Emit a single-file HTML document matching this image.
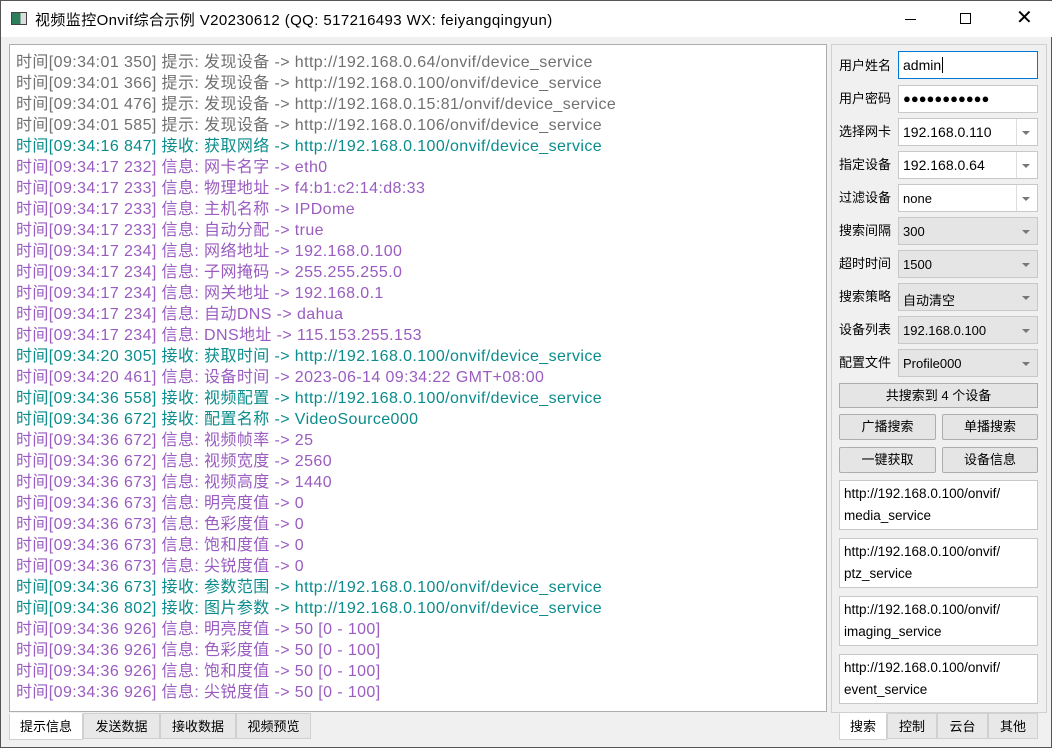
<!DOCTYPE html><html><head><meta charset="utf-8"><style>
*{box-sizing:border-box;margin:0;padding:0}
body{width:1052px;height:748px;background:#f0f0f0;font-family:"Liberation Sans","Noto Sans CJK SC",sans-serif;position:relative;overflow:hidden;border:1px solid #555}
.a{position:absolute}
#title{left:0;top:0;width:1052px;height:36px;background:#fff}
#title .t{left:34px;top:8px;font-size:15px;color:#000;letter-spacing:0.4px}
#log{left:8px;top:43px;width:818px;height:668px;background:#fff;border:1px solid #adadad;padding:7px 0 0 6px;font-size:16px;line-height:21px;white-space:nowrap;letter-spacing:0.4px}
.g{color:#707070}.c{color:#0b8b8b}.p{color:#9a5cc0}
#rp{left:830px;top:43px;width:216px;height:669px;border:1px solid #d0d0d0;background:#f0f0f0}
.lb{left:838px;font-size:13px;color:#000}
.in{left:897px;width:140px;height:28px;background:#fff;border:1px solid #c8c8c8;font-size:14px;padding:5px 4px;color:#000}
.dd::after{content:"";position:absolute;right:0;top:0;width:20px;height:26px;border-left:1px solid #ddd}
.ar{right:7px;top:12px;width:0;height:0;border-left:4px solid transparent;border-right:4px solid transparent;border-top:4px solid #777}
.bt{background:#e5e5e5;border:1px solid #adadad;font-size:13px;text-align:center;line-height:23px;border-radius:2px}
.tb{background:#fff;border:1px solid #c8c8c8;left:838px;width:199px;height:50px;font-size:13.5px;line-height:22px;padding:2px 4px}
.tab{top:712px;height:26px;border:1px solid #d0d0d0;background:#e8e8e8;font-size:13px;text-align:center;line-height:26px}
</style></head><body>
<div id="title" class="a">
<div class="a" style="left:10px;top:11px;width:16px;height:13px;border:1px solid #444;background:linear-gradient(90deg,#2e7d5a 60%,#ddd 60%)"></div>
<div class="a t">视频监控Onvif综合示例 V20230612 (QQ: 517216493 WX: feiyangqingyun)</div>
<div class="a" style="left:904px;top:18px;width:11px;height:1px;background:#000"></div>
<div class="a" style="left:959px;top:12px;width:11px;height:11px;border:1px solid #000"></div>
<div class="a" style="left:1015px;top:6px;font-size:20px;line-height:22px">✕</div>
</div>
<div id="log" class="a">
<div class="g">时间[09:34:01 350] 提示: 发现设备 -&gt; http://192.168.0.64/onvif/device_service</div>
<div class="g">时间[09:34:01 366] 提示: 发现设备 -&gt; http://192.168.0.100/onvif/device_service</div>
<div class="g">时间[09:34:01 476] 提示: 发现设备 -&gt; http://192.168.0.15:81/onvif/device_service</div>
<div class="g">时间[09:34:01 585] 提示: 发现设备 -&gt; http://192.168.0.106/onvif/device_service</div>
<div class="c">时间[09:34:16 847] 接收: 获取网络 -&gt; http://192.168.0.100/onvif/device_service</div>
<div class="p">时间[09:34:17 232] 信息: 网卡名字 -&gt; eth0</div>
<div class="p">时间[09:34:17 233] 信息: 物理地址 -&gt; f4:b1:c2:14:d8:33</div>
<div class="p">时间[09:34:17 233] 信息: 主机名称 -&gt; IPDome</div>
<div class="p">时间[09:34:17 233] 信息: 自动分配 -&gt; true</div>
<div class="p">时间[09:34:17 234] 信息: 网络地址 -&gt; 192.168.0.100</div>
<div class="p">时间[09:34:17 234] 信息: 子网掩码 -&gt; 255.255.255.0</div>
<div class="p">时间[09:34:17 234] 信息: 网关地址 -&gt; 192.168.0.1</div>
<div class="p">时间[09:34:17 234] 信息: 自动DNS -&gt; dahua</div>
<div class="p">时间[09:34:17 234] 信息: DNS地址 -&gt; 115.153.255.153</div>
<div class="c">时间[09:34:20 305] 接收: 获取时间 -&gt; http://192.168.0.100/onvif/device_service</div>
<div class="p">时间[09:34:20 461] 信息: 设备时间 -&gt; 2023-06-14 09:34:22 GMT+08:00</div>
<div class="c">时间[09:34:36 558] 接收: 视频配置 -&gt; http://192.168.0.100/onvif/device_service</div>
<div class="c">时间[09:34:36 672] 接收: 配置名称 -&gt; VideoSource000</div>
<div class="p">时间[09:34:36 672] 信息: 视频帧率 -&gt; 25</div>
<div class="p">时间[09:34:36 672] 信息: 视频宽度 -&gt; 2560</div>
<div class="p">时间[09:34:36 673] 信息: 视频高度 -&gt; 1440</div>
<div class="p">时间[09:34:36 673] 信息: 明亮度值 -&gt; 0</div>
<div class="p">时间[09:34:36 673] 信息: 色彩度值 -&gt; 0</div>
<div class="p">时间[09:34:36 673] 信息: 饱和度值 -&gt; 0</div>
<div class="p">时间[09:34:36 673] 信息: 尖锐度值 -&gt; 0</div>
<div class="c">时间[09:34:36 673] 接收: 参数范围 -&gt; http://192.168.0.100/onvif/device_service</div>
<div class="c">时间[09:34:36 802] 接收: 图片参数 -&gt; http://192.168.0.100/onvif/device_service</div>
<div class="p">时间[09:34:36 926] 信息: 明亮度值 -&gt; 50 [0 - 100]</div>
<div class="p">时间[09:34:36 926] 信息: 色彩度值 -&gt; 50 [0 - 100]</div>
<div class="p">时间[09:34:36 926] 信息: 饱和度值 -&gt; 50 [0 - 100]</div>
<div class="p">时间[09:34:36 926] 信息: 尖锐度值 -&gt; 50 [0 - 100]</div>
</div>
<div class="a tab" style="left:8px;width:74px;background:#fff;border-top-color:#fff;height:27px">提示信息</div>
<div class="a tab" style="left:82px;width:77px">发送数据</div>
<div class="a tab" style="left:159px;width:76px">接收数据</div>
<div class="a tab" style="left:235px;width:75px">视频预览</div>
<div id="rp" class="a"></div>
<div class="a lb" style="top:54px">用户姓名</div><div class="a in" style="top:50px;border-color:#0078d7">admin<span style="border-left:1px solid #000;margin-left:1px"></span></div>
<div class="a lb" style="top:87px">用户密码</div><div class="a in" style="top:84px;font-size:13px;letter-spacing:0">●●●●●●●●●●●</div>
<div class="a lb" style="top:120px">选择网卡</div><div class="a in dd" style="top:117px">192.168.0.110<div class="a ar"></div></div>
<div class="a lb" style="top:153px">指定设备</div><div class="a in dd" style="top:150px">192.168.0.64<div class="a ar"></div></div>
<div class="a lb" style="top:186px">过滤设备</div><div class="a in dd" style="top:183px;font-size:13px;padding-top:6px">none<div class="a ar"></div></div>
<div class="a lb" style="top:219px">搜索间隔</div><div class="a in" style="top:216px;font-size:13px;background:#e5e5e5;padding-top:6px">300<div class="a ar"></div></div>
<div class="a lb" style="top:252px">超时时间</div><div class="a in" style="top:249px;font-size:13px;background:#e5e5e5;padding-top:6px">1500<div class="a ar"></div></div>
<div class="a lb" style="top:285px">搜索策略</div><div class="a in" style="top:282px;font-size:13px;background:#e5e5e5;padding-top:6px">自动清空<div class="a ar"></div></div>
<div class="a lb" style="top:318px">设备列表</div><div class="a in" style="top:315px;font-size:13px;background:#e5e5e5;padding-top:6px">192.168.0.100<div class="a ar"></div></div>
<div class="a lb" style="top:351px">配置文件</div><div class="a in" style="top:348px;font-size:13px;background:#e5e5e5;padding-top:6px">Profile000<div class="a ar"></div></div>
<div class="a bt" style="left:838px;top:382px;width:199px;height:25px;border-radius:0">共搜索到 4 个设备</div>
<div class="a bt" style="left:838px;top:413px;width:97px;height:26px">广播搜索</div>
<div class="a bt" style="left:941px;top:413px;width:96px;height:26px">单播搜索</div>
<div class="a bt" style="left:838px;top:446px;width:97px;height:26px">一键获取</div>
<div class="a bt" style="left:941px;top:446px;width:96px;height:26px">设备信息</div>
<div class="a tb" style="top:479px">http://192.168.0.100/onvif/<br>media_service</div>
<div class="a tb" style="top:537px">http://192.168.0.100/onvif/<br>ptz_service</div>
<div class="a tb" style="top:595px">http://192.168.0.100/onvif/<br>imaging_service</div>
<div class="a tb" style="top:653px">http://192.168.0.100/onvif/<br>event_service</div>
<div class="a tab" style="left:838px;width:48px;background:#fff;border-top-color:#fff;height:27px">搜索</div>
<div class="a tab" style="left:886px;width:50px">控制</div>
<div class="a tab" style="left:936px;width:51px">云台</div>
<div class="a tab" style="left:987px;width:50px">其他</div>
</body></html>
